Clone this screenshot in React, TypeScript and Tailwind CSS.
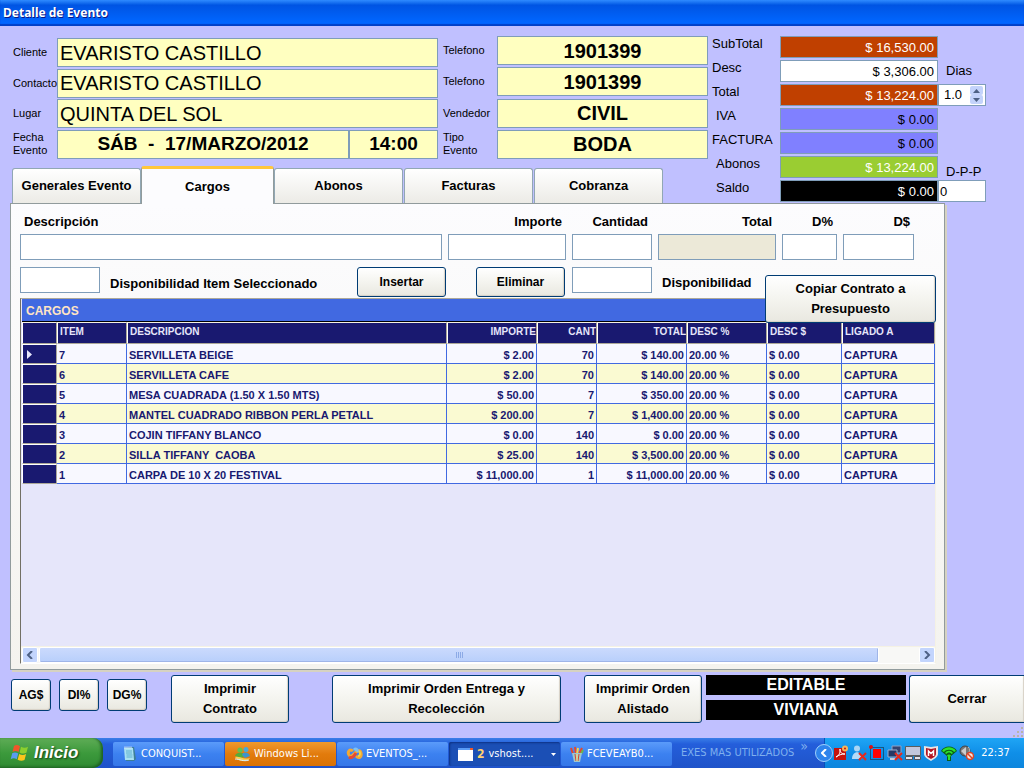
import React from "react";

const SANS = "font-['Liberation_Sans',sans-serif]";
const BOX = "min-w-0 border border-[#7f9db9] outline-none";
const XP_BUTTON =
  "shrink-0 rounded-[3px] border border-[#003c74] bg-linear-to-b from-white via-[#f4f4ef] to-[#e9e8e0] font-bold text-black shadow-[inset_-1px_-1px_1px_#d6d0c5]";

type FieldProps = { id: string; label: string; value: string };

function ClientField({ id, label, value }: FieldProps) {
  return (
    <div className="flex items-center">
      <label htmlFor={id} className="w-[45px] shrink-0 pl-px text-[11px] leading-[13px]">
        {label}
      </label>
      <input
        id={id}
        defaultValue={value}
        className={`${BOX} h-[29px] flex-1 bg-[#ffffc0] px-[2px] text-[20px]`}
      />
    </div>
  );
}

function EventField({ id, label, value }: FieldProps) {
  return (
    <div className="flex items-center">
      <label htmlFor={id} className="w-[59px] shrink-0 pl-[5px] text-[11px] leading-[13px]">
        <span className="block w-10">{label}</span>
      </label>
      <input
        id={id}
        defaultValue={value}
        className={`${BOX} h-[29px] w-[211px] bg-[#ffffc0] text-center text-[20px] font-bold`}
      />
    </div>
  );
}

const totals = [
  { id: "subtotal", label: "SubTotal", value: "$ 16,530.00", tone: "bg-[#c04000] text-white", indent: "pl-1" },
  { id: "desc", label: "Desc", value: "$ 3,306.00", tone: "bg-white text-black", indent: "pl-1" },
  { id: "total", label: "Total", value: "$ 13,224.00", tone: "bg-[#c04000] text-white", indent: "pl-1" },
  { id: "iva", label: "IVA", value: "$ 0.00", tone: "bg-[#8080ff] text-black", indent: "pl-2" },
  { id: "factura", label: "FACTURA", value: "$ 0.00", tone: "bg-[#8080ff] text-black", indent: "pl-1" },
  { id: "abonos", label: "Abonos", value: "$ 13,224.00", tone: "bg-[#9acd32] text-white", indent: "pl-2" },
  { id: "saldo", label: "Saldo", value: "$ 0.00", tone: "bg-black text-white", indent: "pl-2" },
];

function TotalExtra({ id }: { id: string }) {
  if (id === "desc")
    return (
      <label htmlFor="dias" className="w-12 self-center pl-2 text-[13px] leading-4">
        Dias
      </label>
    );
  if (id === "total")
    return (
      <div className="flex h-[22px] w-12 border border-[#7f9db9] bg-white">
        <input id="dias" defaultValue="1.0" className="w-[31px] pl-[5px] text-[13px] outline-none" />
        <div className="my-px flex w-[13px] flex-col">
          {["Subir", "Bajar"].map((name, i) => (
            <button key={name} aria-label={name} className="flex flex-1 items-center justify-center rounded-[2px] bg-[#c3d3fb]">
              <svg width="7" height="4" viewBox="0 0 7 4">
                <path d={i ? "M0 0h7L3.5 4z" : "M0 4h7L3.5 0z"} fill="#4d6185" />
              </svg>
            </button>
          ))}
        </div>
      </div>
    );
  if (id === "abonos")
    return (
      <label htmlFor="dpp" className="w-12 self-end pl-2 text-[13px] leading-3 whitespace-nowrap">
        D-P-P
      </label>
    );
  if (id === "saldo")
    return <input id="dpp" defaultValue="0" className={`${BOX} h-[22px] w-12 bg-white px-px text-[13px]`} />;
  return <span className="w-12" />;
}

const tabs = ["Generales Evento", "Cargos", "Abonos", "Facturas", "Cobranza"];

const entryFields = [
  { id: "descripcion", label: "Descripción", size: "flex-1", align: "pl-1 text-left", fill: "bg-white" },
  { id: "importe", label: "Importe", size: "w-[118px]", align: "pr-1 text-right", fill: "bg-white" },
  { id: "cantidad", label: "Cantidad", size: "w-20", align: "pr-1 text-right", fill: "bg-white" },
  { id: "totalItem", label: "Total", size: "w-[118px]", align: "pr-1 text-right", fill: "bg-[#ece9d8]" },
  { id: "dporc", label: "D%", size: "w-[55px]", align: "pr-1 text-right", fill: "bg-white" },
  { id: "dpesos", label: "D$", size: "w-[71px]", align: "pr-1 text-right", fill: "bg-white" },
];

const columns = [
  { name: "ITEM", width: "w-[70px]", right: false },
  { name: "DESCRIPCION", width: "w-[320px]", right: false },
  { name: "IMPORTE", width: "w-[90px]", right: true },
  { name: "CANT", width: "w-[60px]", right: true },
  { name: "TOTAL", width: "w-[90px]", right: true },
  { name: "DESC %", width: "w-20", right: false },
  { name: "DESC $", width: "w-[75px]", right: false },
  { name: "LIGADO A", width: "", right: false },
];

const rows = [
  ["7", "SERVILLETA BEIGE", "$ 2.00", "70", "$ 140.00"],
  ["6", "SERVILLETA CAFE", "$ 2.00", "70", "$ 140.00"],
  ["5", "MESA CUADRADA (1.50 X 1.50 MTS)", "$ 50.00", "7", "$ 350.00"],
  ["4", "MANTEL CUADRADO RIBBON PERLA PETALL", "$ 200.00", "7", "$ 1,400.00"],
  ["3", "COJIN TIFFANY BLANCO", "$ 0.00", "140", "$ 0.00"],
  ["2", "SILLA TIFFANY  CAOBA", "$ 25.00", "140", "$ 3,500.00"],
  ["1", "CARPA DE 10 X 20 FESTIVAL", "$ 11,000.00", "1", "$ 11,000.00"],
].map((r) => [...r, "20.00 %", "$ 0.00", "CAPTURA"]);

function ChargesTable() {
  return (
    <table className="w-full table-fixed border-separate border-spacing-0 text-[11px] leading-4 font-bold text-[#191970]">
      <caption className="h-[23px] border-b border-black bg-[#4169e1] pl-1 text-left text-[12px] leading-6 text-[#ffe4c4]">
        CARGOS
      </caption>
      <thead>
        <tr className="h-[22px] bg-[#191970] text-[10px] text-[#e6e6fa]">
          <th aria-label="Fila" className="w-[35px] border border-t-[#f5f2e4] border-r-[#aca899] border-b-[#aca899] border-l-white p-0" />
          {columns.map((c) => (
            <th
              key={c.name}
              className={`overflow-hidden border border-t-[#f5f2e4] border-r-[#aca899] border-b-[#aca899] border-l-white p-0 pb-[2px] whitespace-nowrap ${c.width} ${c.right ? "text-right" : "pl-[2px] text-left"}`}
            >
              {c.name}
            </th>
          ))}
        </tr>
      </thead>
      <tbody>
        {rows.map((row, i) => (
          <tr key={row[0]} className={`h-5 ${i % 2 ? "bg-[#fafad2]" : "bg-[#f8f8ff]"}`}>
            <th className="border border-t-white border-r-[#aca899] border-b-[#aca899] border-l-white bg-[#191970] p-0 pl-[4px]">
              {i === 0 && (
                <svg className="block" width="5" height="9" viewBox="0 0 5 9">
                  <path d="M0 0v9l5-4.5z" fill="#e6e6fa" />
                </svg>
              )}
            </th>
            {row.map((cell, j) => (
              <td
                key={j}
                className={`overflow-hidden border-r border-b border-[#4169e1] p-0 pt-[3px] whitespace-pre ${columns[j].right ? "pr-[2px] text-right" : "pl-[2px]"}`}
              >
                {cell}
              </td>
            ))}
          </tr>
        ))}
      </tbody>
    </table>
  );
}

function ScrollArrow({ label, d }: { label: string; d: string }) {
  return (
    <button aria-label={label} className="flex h-4 w-4 items-center justify-center rounded-[2px] border border-white bg-[#c3d5fd]">
      <svg width="8" height="8" viewBox="0 0 8 8" fill="none" stroke="#4d6185" strokeWidth="2">
        <path d={d} />
      </svg>
    </button>
  );
}

function WindowsLogo() {
  return (
    <svg width="20" height="20" viewBox="0 0 20 20">
      <path d="M4 3c2-1.500 4-1 6 .2L8.600 9C6.500 7.800 4.500 7.800 2.500 9z" fill="#f0562a" />
      <path d="M11 3.800c2.500 1.200 4.500 1.300 7 0L16.400 9.800c-2.300 1.200-4.300 1-6.800-.4z" fill="#8ccf2e" />
      <path d="M2.200 10.200c2-1.200 4-1 6 .2L6.700 16.200c-2-1.200-4-1.200-6 0z" fill="#5a9cf0" />
      <path d="M9.200 11c2.400 1.200 4.500 1.300 6.900 0l-1.600 6c-2.300 1.200-4.400 1-6.900-.3z" fill="#fbc51c" />
    </svg>
  );
}

function NotebookIcon() {
  return (
    <svg width="16" height="16" viewBox="0 0 16 16">
      <path d="M3 2l9-1 2 12-2 2H4z" fill="#3d7f96" />
      <path d="M2 2h9l1 12H3z" fill="#a8e0f2" />
      <path d="M4 5h6M4 7h6M4.500 9h6M4.500 11h6" stroke="#5fb0d0" />
      <path d="M2.500 1.500h8" stroke="#e9f4f8" strokeDasharray="1 1" strokeWidth="2" />
    </svg>
  );
}

function MessengerIcon() {
  return (
    <svg width="17" height="16" viewBox="0 0 17 16">
      <circle cx="6" cy="4" r="2.600" fill="#68c04a" />
      <circle cx="12" cy="3.500" r="2.500" fill="#4aa8d8" />
      <path d="M1 10c1-4 8-4 10-1l-3 3z" fill="#54ad3b" />
      <path d="M8 9c1-4 7-3 8 1l-5 2z" fill="#3d94cc" />
      <path d="M1 11c5-1 8 3 15 1-2 4-12 4-15-1z" fill="#f8cf53" />
      <path d="M1 13c5 0 8 3 14 1" stroke="#d7f1ff" fill="none" />
    </svg>
  );
}

function EventsIcon() {
  return (
    <svg width="17" height="14" viewBox="0 0 17 14" fill="none" strokeWidth="3">
      <path d="M7 4C4 1 1 5 3 8s4 0 6-2 5-4 6 0-2 6-5 3" stroke="#f3a934" />
      <path d="M3 10c3 2 5-1 7-4" stroke="#e84a32" />
      <path d="M8 3c2-2 4 0 3 2" stroke="#7bc0f5" />
      <path d="M13 4c2 2 1 5-1 5" stroke="#f4d248" strokeWidth="2" />
    </svg>
  );
}

function WindowIcon() {
  return (
    <svg width="15" height="13" viewBox="0 0 15 13">
      <path d="M0 0h15v13H0z" fill="#fff" />
      <path d="M0 0h15v2H0z" fill="#5a9bf5" />
      <path d="M12 0h3v2h-3z" fill="#ef5a2a" />
    </svg>
  );
}

function PaintIcon() {
  return (
    <svg width="14" height="17" viewBox="0 0 14 17">
      <path d="M3 8L1 2M6 8L5 1M9 8l3-6" stroke="#e5482c" strokeWidth="2" />
      <path d="M7 8l1-6" stroke="#f7d24a" strokeWidth="2" />
      <path d="M11 8l2-4" stroke="#6ab54c" strokeWidth="2" />
      <path d="M2 7h10l-2 9H4z" fill="#9cc7cf" />
      <path d="M5 8l1 7M9 8l-1 7" stroke="#d9472b" />
      <path d="M7 8v7" stroke="#efe27a" />
    </svg>
  );
}

const tasks = [
  { name: "CONQUIST...", icon: <NotebookIcon />, tone: "bg-linear-to-b from-[#5b9bfa] via-[#3c81f0] to-[#3677e8]" },
  { name: "Windows Li...", icon: <MessengerIcon />, tone: "bg-linear-to-b from-[#f09a2c] via-[#e27b0c] to-[#d97206]" },
  { name: "EVENTOS_...", icon: <EventsIcon />, tone: "bg-linear-to-b from-[#5b9bfa] via-[#3c81f0] to-[#3677e8]" },
  { name: "vshost....", icon: <WindowIcon />, tone: "bg-[#1b4fb5] shadow-[inset_1px_1px_2px_#0d3184]", count: "2" },
  { name: "FCEVEAYB0...", icon: <PaintIcon />, tone: "bg-linear-to-b from-[#5b9bfa] via-[#3c81f0] to-[#3677e8]" },
];

function TrayIcons() {
  return (
    <div className="flex items-center gap-[2px]">
      <svg width="16" height="16" viewBox="0 0 16 16">
        <path d="M1 3h12v12H1z" fill="#c5130d" />
        <path d="M3 12c4-2 4-5 4-8 0 4 2 5 5 5-4 0-6 1-9 3z" fill="none" stroke="#fff" />
        <circle cx="12" cy="3.500" r="3" fill="#f6b65b" />
        <circle cx="12" cy="3.500" r="1" fill="#c5130d" />
      </svg>
      <svg width="16" height="16" viewBox="0 0 16 16">
        <circle cx="6" cy="3.500" r="3" fill="#a9d5f5" />
        <path d="M1 14c0-9 10-9 10 0z" fill="#b4daf8" />
        <path d="M8 8l7 7M15 8l-7 7" stroke="#e5291f" strokeWidth="2" />
      </svg>
      <svg width="16" height="16" viewBox="0 0 16 16">
        <path d="M4 4h8v9H4z" fill="#fd0000" />
        <path d="M1.500 2.500h13v12h-13z" fill="none" stroke="#181818" strokeDasharray="1 1" />
        <circle cx="2" cy="2" r="2" fill="#e01010" />
      </svg>
      <svg width="16" height="16" viewBox="0 0 16 16">
        <path d="M5 1h9v7H5z" fill="#34446f" stroke="#8fa3c8" />
        <path d="M1 5h9v7H1z" fill="#263966" stroke="#9cb0d2" />
        <path d="M3 14h6" stroke="#c3cede" strokeWidth="2" />
        <path d="M8 8l7 7M15 8l-7 7" stroke="#e5291f" strokeWidth="2" />
      </svg>
      <svg width="16" height="16" viewBox="0 0 16 16">
        <path d="M.500 1.500h15v9H.500z" fill="#c3c7dc" stroke="#5d5d5d" />
        <path d="M.500 11.500h7v3h-7zM9.500 11.500h6v3h-6z" fill="#e4e4ec" stroke="#55555c" />
      </svg>
      <svg width="16" height="16" viewBox="0 0 16 16">
        <path d="M1 1l7 1 7-1v8c0 3-4 5-7 7-3-2-7-4-7-7z" fill="#e9e4e4" />
        <path d="M3 3l5 1 5-1v6c0 2-3 4-5 5-2-1-5-3-5-5z" fill="#b41420" />
        <path d="M5.500 11V6l2.500 2.500L10.500 6v5" fill="none" stroke="#fff" strokeWidth="1.500" />
      </svg>
      <svg width="16" height="16" viewBox="0 0 16 16">
        <path d="M0 6c3-6 13-6 16 0l-6 5v5H6v-5z" fill="#0b5d18" />
        <path d="M1 6c3-5 11-5 14 0l-2 1c-2-3-8-3-10 0zM4 8c2-3 6-3 8 0l-1.500 1c-1-2-4-2-5 0zM6 10.500c1-1.500 3-1.500 4 0L9 12v3H7v-3z" fill="#2ce32c" />
      </svg>
      <svg width="16" height="16" viewBox="0 0 16 16">
        <circle cx="6" cy="6" r="5" fill="#777" stroke="#444" />
        <path d="M2 6l5-4v9z" fill="#ccc" />
        <path d="M9 2c2 1 2 5 0 7" stroke="#bbb" fill="none" />
        <circle cx="11" cy="11" r="3.500" fill="#f6e6e2" stroke="#dc4526" strokeWidth="1.500" />
        <path d="M8.500 8.500l5 5" stroke="#dc4526" strokeWidth="1.500" />
      </svg>
    </div>
  );
}

export default function App() {
  return (
    <div className={`flex min-h-screen flex-col bg-[#c0c0ff] text-black ${SANS}`}>
      <header className="flex h-[26px] items-center bg-linear-to-b from-[#2f8bff] via-[#0054e3] via-20% to-[#0066ff] to-85% pl-[3px] shadow-[inset_0_-2px_1px_#0040c8]">
        <h1 className="font-['Noto_Sans',sans-serif] text-[12px] font-bold text-white [text-shadow:1px_1px_#0a1883]">
          Detalle de Evento
        </h1>
      </header>

      <div className="flex pt-[10px] pr-[38px] pl-3">
        <div className="flex min-w-0 flex-1 flex-col justify-between">
          <div className="flex">
            <div className="flex min-w-0 flex-1 flex-col justify-between pt-[2px]">
              <ClientField id="cliente" label="Cliente" value="EVARISTO CASTILLO" />
              <ClientField id="contacto" label="Contacto" value="EVARISTO CASTILLO" />
              <ClientField id="lugar" label="Lugar" value="QUINTA DEL SOL" />
              <div className="flex items-center">
                <label htmlFor="fecha" className="w-[45px] shrink-0 pl-px text-[11px] leading-[13px]">
                  Fecha Evento
                </label>
                <input
                  id="fecha"
                  defaultValue="SÁB  -  17/MARZO/2012"
                  className={`${BOX} h-[29px] flex-1 bg-[#ffffc0] text-center text-[19px] font-bold`}
                />
                <input
                  aria-label="Hora"
                  defaultValue="14:00"
                  className={`${BOX} h-[29px] w-[89px] bg-[#ffffc0] text-center text-[19px] font-bold`}
                />
              </div>
            </div>
            <div className="flex h-[123px] flex-col justify-between">
              <EventField id="tel1" label="Telefono" value="1901399" />
              <EventField id="tel2" label="Telefono" value="1901399" />
              <EventField id="vendedor" label="Vendedor" value="CIVIL" />
              <EventField id="tipo" label="Tipo Evento" value="BODA" />
            </div>
          </div>

          <div role="tablist" className="relative z-10 mt-[7px] -mb-px flex items-end text-[13px] font-bold whitespace-nowrap">
            {tabs.map((tab) =>
              tab === "Cargos" ? (
                <button
                  key={tab}
                  role="tab"
                  aria-selected="true"
                  className="h-[38px] w-[133px] rounded-t-[3px] border-x border-t-3 border-x-[#919b9c] border-t-[#ffc73c] bg-[#fcfcfe]"
                >
                  {tab}
                </button>
              ) : (
                <button
                  key={tab}
                  role="tab"
                  aria-selected="false"
                  className="mr-px mb-px h-[35px] w-[129px] rounded-t-[3px] border border-b-0 border-[#91a7b4] bg-linear-to-b from-white to-[#ecebe6] first:mr-0"
                >
                  {tab}
                </button>
              ),
            )}
          </div>
        </div>

        <div className="flex h-[167px] flex-col gap-[2px]">
          {totals.map((t) => (
            <div key={t.id} className="flex h-[22px]">
              <label htmlFor={t.id} className={`w-[72px] text-[13px] leading-4 ${t.indent}`}>
                {t.label}
              </label>
              <input
                id={t.id}
                defaultValue={t.value}
                className={`${BOX} h-[22px] w-[158px] px-[3px] text-right text-[13px] ${t.tone}`}
              />
              <TotalExtra id={t.id} />
            </div>
          ))}
        </div>
      </div>

      <main className="relative mr-[79px] ml-[10px] flex flex-1 flex-col border border-[#919b9c] bg-linear-to-b from-[#fcfcfe] to-[#f4f3ee] pt-[10px] pr-2 pb-[5px] pl-[9px] shadow-[2px_2px_#d6d2c2]">
        <div className="flex gap-[6px] pr-[22px]">
          {entryFields.map((f) => (
            <div key={f.id} className={`flex min-w-0 flex-col ${f.size}`}>
              <label htmlFor={f.id} className={`h-5 text-[13px] leading-4 font-bold ${f.align}`}>
                {f.label}
              </label>
              <input id={f.id} className={`${BOX} h-[26px] w-full ${f.fill}`} />
            </div>
          ))}
        </div>

        <div className="mt-[7px] flex h-[31px] items-start text-[13px] font-bold">
          <input id="dispItem" className={`${BOX} h-[26px] w-20 shrink-0 bg-white`} />
          <label htmlFor="dispItem" className="flex-1 pt-[9px] pl-[10px] leading-4 whitespace-nowrap">
            Disponibilidad Item Seleccionado
          </label>
          <button className={`${XP_BUTTON} h-[30px] w-[89px] text-[12px]`}>Insertar</button>
          <button className={`${XP_BUTTON} ml-[30px] h-[30px] w-[89px] text-[12px]`}>Eliminar</button>
          <input id="disp" className={`${BOX} ml-[7px] h-[26px] w-20 shrink-0 bg-white`} />
          <label htmlFor="disp" className="w-[284px] shrink-0 pt-2 pl-[10px] leading-4">
            Disponibilidad
          </label>
        </div>

        <section className="flex flex-1 flex-col border border-t-[#aca899] border-r-[#f5f2e4] border-b-white border-l-[#716f64] bg-[#e6e6fa]">
          <div className="flex-1 pl-px">
            <ChargesTable />
          </div>
          <div className="flex h-[17px] items-center gap-px border-t border-[#f5f2e4] bg-[#f8f8f6] pl-px">
            <ScrollArrow label="Izquierda" d="M6 0L2 4l4 4" />
            <div className="flex flex-1">
              <div className="flex h-4 w-[840px] max-w-full items-center justify-center gap-px rounded-[2px] border border-white bg-linear-to-b from-[#cbdafd] to-[#b8cffb] shadow-[inset_-1px_-1px_#9fb5e8]">
                {[0, 1, 2, 3].map((n) => (
                  <span key={n} className="h-[6px] w-px bg-[#8caae6]" />
                ))}
              </div>
            </div>
            <ScrollArrow label="Derecha" d="M2 0l4 4-4 4" />
          </div>
        </section>

        <button className={`${XP_BUTTON} absolute top-[71px] right-2 h-12 w-[171px] px-4 text-[13px] leading-5`}>
          Copiar Contrato a Presupuesto
        </button>
      </main>

      <footer className="relative flex items-start pt-[5px] pb-[15px] pl-[11px] text-[13px] leading-5">
        <div className="flex gap-2 pt-1 text-[12px]">
          <button className={`${XP_BUTTON} h-8 w-10`}>AG$</button>
          <button className={`${XP_BUTTON} h-8 w-10`}>DI%</button>
          <button className={`${XP_BUTTON} h-8 w-10`}>DG%</button>
        </div>
        <button className={`${XP_BUTTON} ml-6 h-12 w-[118px] px-6`}>Imprimir Contrato</button>
        <button className={`${XP_BUTTON} ml-[43px] h-12 w-[229px] px-6`}>
          Imprimir Orden Entrega y Recolección
        </button>
        <button className={`${XP_BUTTON} ml-[23px] h-12 w-[118px]`}>Imprimir Orden Alistado</button>
        <div className="ml-1 flex w-[200px] flex-col gap-[5px] text-center text-[16px] font-bold text-white">
          <span className="bg-black">EDITABLE</span>
          <span className="bg-black">VIVIANA</span>
        </div>
        <button className={`${XP_BUTTON} ml-[3px] h-12 flex-1 rounded-r-none border-r-0`}>Cerrar</button>
        <svg className="absolute right-0 bottom-0" width="11" height="11" viewBox="0 0 11 11">
          <path d="M8 0h2v2H8zM4 4h2v2H4zM8 4h2v2H8zM0 8h2v2H0zM4 8h2v2H4zM8 8h2v2H8z" fill="#b8b4a8" />
        </svg>
      </footer>

      <nav className="flex h-[30px] items-stretch bg-linear-to-b from-[#3a7ee8] via-[#245edb] via-20% to-[#1f53c9] font-['DejaVu_Sans_Condensed','DejaVu_Sans',sans-serif] text-[11px] text-white">
        <button
          className={`flex w-[103px] items-center gap-1 rounded-r-[10px] bg-linear-to-b from-[#5eac56] via-[#3c9a3c] to-[#2f8a32] pl-[10px] text-[17px] font-bold italic shadow-[inset_-2px_-1px_3px_#1d5f21] [text-shadow:1px_1px_2px_#123c12] ${SANS}`}
        >
          <WindowsLogo />
          Inicio
        </button>
        <div className="flex items-center gap-px pt-[2px] pl-[10px]">
          {tasks.map((t) => (
            <button key={t.name} className={`flex h-6 w-[111px] items-center rounded-[2px] pl-[9px] text-left whitespace-nowrap ${t.tone}`}>
              {t.icon}
              {t.count && <b className="ml-1 text-[12px] text-[#ffd070]">{t.count}</b>}
              <span className={t.count ? "ml-1 flex-1" : "ml-[3px] flex-1"}>{t.name}</span>
              {t.count && (
                <svg className="mr-1" width="5" height="3" viewBox="0 0 5 3">
                  <path d="M0 0h5L2.500 3z" fill="#fff" />
                </svg>
              )}
            </button>
          ))}
        </div>
        <div className="flex min-w-0 flex-1 items-center justify-between pr-4 pl-[9px] whitespace-nowrap text-[#7fb0ee]">
          <span>EXES MAS UTILIZADOS</span>
          <span className="self-start text-[14px] leading-4">»</span>
        </div>
        <div className="flex w-[200px] items-center border-l border-[#0c4fb8] bg-linear-to-b from-[#1fa5f5] via-[#0f8fe8] to-[#0d86dd]">
          <button
            aria-label="Mostrar iconos ocultos"
            className="-ml-[10px] flex h-[18px] w-[18px] items-center justify-center rounded-full border border-[#9fd0fb] bg-[#2e84ec]"
          >
            <svg width="6" height="8" viewBox="0 0 6 8">
              <path d="M5 0L1 4l4 4" fill="none" stroke="#fff" strokeWidth="2" />
            </svg>
          </button>
          <TrayIcons />
          <time className="flex-1 pr-2 text-center text-[11px]">22:37</time>
        </div>
      </nav>
    </div>
  );
}
